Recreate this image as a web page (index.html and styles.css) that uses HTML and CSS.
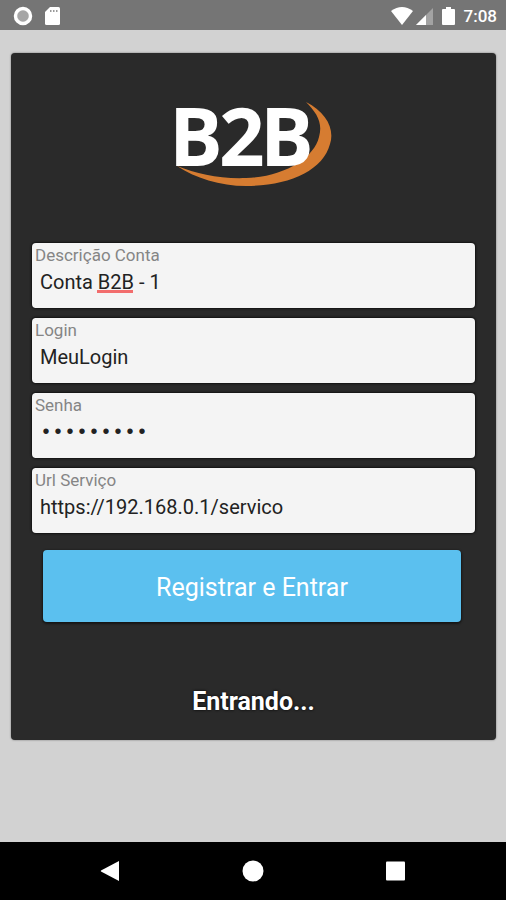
FILE: index.html
```html
<!DOCTYPE html>
<html lang="pt-BR">
<head>
    <meta charset="UTF-8">
    <meta name="viewport" content="width=device-width, initial-scale=1.0">
    <title>Conta B2B</title>
    <link rel="stylesheet" href="styles.css">
</head>
<body>
    <header class="status-bar">
        <div class="status-left">
            <svg width="20" height="20" viewBox="0 0 20 20">
                <circle cx="10" cy="10" r="6" fill="#a6a6a6"/>
                <circle cx="10" cy="10" r="7.5" fill="none" stroke="#fff" stroke-width="3.5"/>
            </svg>
            <svg width="16" height="20" viewBox="0 0 16 20">
                <path d="M6 1H14.500Q16 1 16 2.500V17.500Q16 19 14.500 19H2.500Q1 19 1 17.500V6Z" fill="#fff"/>
                <path d="M6 4h1.500v2H6zM9 4h1.500v2H9zM12 4h1.500v2H12z" fill="#999"/>
            </svg>
        </div>
        <div class="status-right">
            <svg width="22" height="20" viewBox="0 0 22 20">
                <path d="M0 5Q11-3 22 5L11 19Z" fill="#fff"/>
            </svg>
            <svg class="signal" width="18" height="20" viewBox="0 0 18 20">
                <path d="M18 2V19H1Z" fill="#a3a3a3"/>
                <path d="M11 9V19H1Z" fill="#fff"/>
            </svg>
            <svg class="battery" width="13" height="20" viewBox="0 0 13 20">
                <path d="M4 1h5v2H12q1 0 1 1v14q0 1-1 1H1q-1 0-1-1V4q0-1 1-1h3z" fill="#fff"/>
            </svg>
            <span class="clock">7:08</span>
        </div>
    </header>

    <main>
        <form class="card" id="formConta">
            <svg class="logo" width="170" height="110" viewBox="0 -20 170 110" role="img" aria-label="B2B">
                <path d="M137 6C157 16 166 33 161 48C154 75 119 90 77 90C51 90 26 82 8 70C28 78 51 83 77 82C115 81 145 62 150 41C154 27 148 17 137 6Z" fill="#d67c31"/>
                <text class="logo-text" x="0 50 91" y="70">B2B</text>
            </svg>

            <div class="field">
                <label for="descricao">Descrição Conta</label>
                <input type="text" class="misspelled" id="descricao" name="descricao" value="Conta B2B - 1">
            </div>
            <div class="field">
                <label for="login">Login</label>
                <input type="text" id="login" name="login" value="MeuLogin">
            </div>
            <div class="field">
                <label for="senha">Senha</label>
                <input type="password" id="senha" name="senha" value="senha1234">
            </div>
            <div class="field">
                <label for="url">Url Serviço</label>
                <input type="text" id="url" name="url" value="https://192.168.0.1/servico">
            </div>

            <button type="submit" class="btn-entrar">Registrar e Entrar</button>
            <p class="mensagem">Entrando...</p>
        </form>
    </main>

    <nav class="nav-bar">
        <button type="button" aria-label="Voltar">
            <svg width="22" height="22" viewBox="0 0 22 22"><path d="M20 1V21L2 11.500Q1.500 11 2 10.500Z" fill="#fff"/></svg>
        </button>
        <button type="button" aria-label="Início">
            <svg width="22" height="22" viewBox="0 0 22 22"><circle cx="11" cy="11" r="10.500" fill="#fff"/></svg>
        </button>
        <button type="button" aria-label="Recentes">
            <svg width="22" height="22" viewBox="0 0 22 22"><rect x="1" y="1.500" width="19" height="19" rx="1" fill="#fff"/></svg>
        </button>
    </nav>
</body>
</html>
```
FILE: styles.css
```css
* {
    box-sizing: border-box;
}

body {
    font-family: Roboto, sans-serif;
    background-color: #d2d2d2;
    margin: 0;
    display: flex;
    flex-direction: column;
    min-height: 100vh;
}

svg {
    display: block;
}

.status-bar {
    display: flex;
    justify-content: space-between;
    align-items: center;
    height: 30px;
    padding: 1px 9px 0 13px;
    background-color: #757575;
    color: #fff;
}

.status-left, .status-right {
    display: flex;
    align-items: center;
}

.status-left {
    gap: 11px;
}

.signal {
    margin-left: 2px;
}

.battery {
    margin: 0 9px;
}

.clock {
    font-size: 17px;
    font-weight: 500;
    line-height: 20px;
}

main {
    flex: 1;
    padding: 23px 10px 20px 11px;
}

.card {
    display: flex;
    flex-direction: column;
    gap: 10px;
    padding: 23px 21px 22px;
    background-color: #2a2a2a;
    border-radius: 4px;
    box-shadow: 0 0 2px rgba(0, 0, 0, 0.5);
}

.logo {
    align-self: center;
    margin-bottom: 47px;
    overflow: visible;
}

.logo-text {
    font-family: "Open Sans", sans-serif;
    font-size: 80px;
    font-weight: 700;
    fill: #fff;
}

.field {
    height: 65px;
    padding: 2px 3px;
    background-color: #f4f4f4;
    border-radius: 4px;
    box-shadow: 0 0 2px 1px #111;
}

label {
    display: block;
    color: #858585;
    font-size: 17px;
    line-height: 20px;
}

input {
    display: block;
    width: 100%;
    height: 34px;
    padding: 0 5px;
    border: none;
    background-color: transparent;
    color: #222;
    font-family: inherit;
    font-size: 20px;
}

input:focus {
    outline: 0;
}

input[type="password"] {
    font-family: "Liberation Mono", monospace;
}

.misspelled {
    background: linear-gradient(#f26d6d, #f26d6d) 62px 25px / 36px 3px no-repeat;
}

.btn-entrar {
    height: 72px;
    margin: 7px 14px 0 11px;
    padding: 2px 0 0;
    border: none;
    border-radius: 4px;
    background-color: #5bc0ef;
    box-shadow: 0 1px 2px 1px #161616;
    color: #fff;
    font-family: inherit;
    font-size: 25px;
    cursor: pointer;
}

.mensagem {
    margin: 54px 0 0;
    color: #fff;
    font-size: 25px;
    font-weight: 700;
    line-height: 32px;
    text-align: center;
    text-shadow: 0 0 3px #000;
}

.nav-bar {
    display: flex;
    justify-content: center;
    gap: 121px;
    height: 58px;
    background-color: #000;
}

.nav-bar button {
    padding: 0;
    border: none;
    background: none;
    cursor: pointer;
}
```
